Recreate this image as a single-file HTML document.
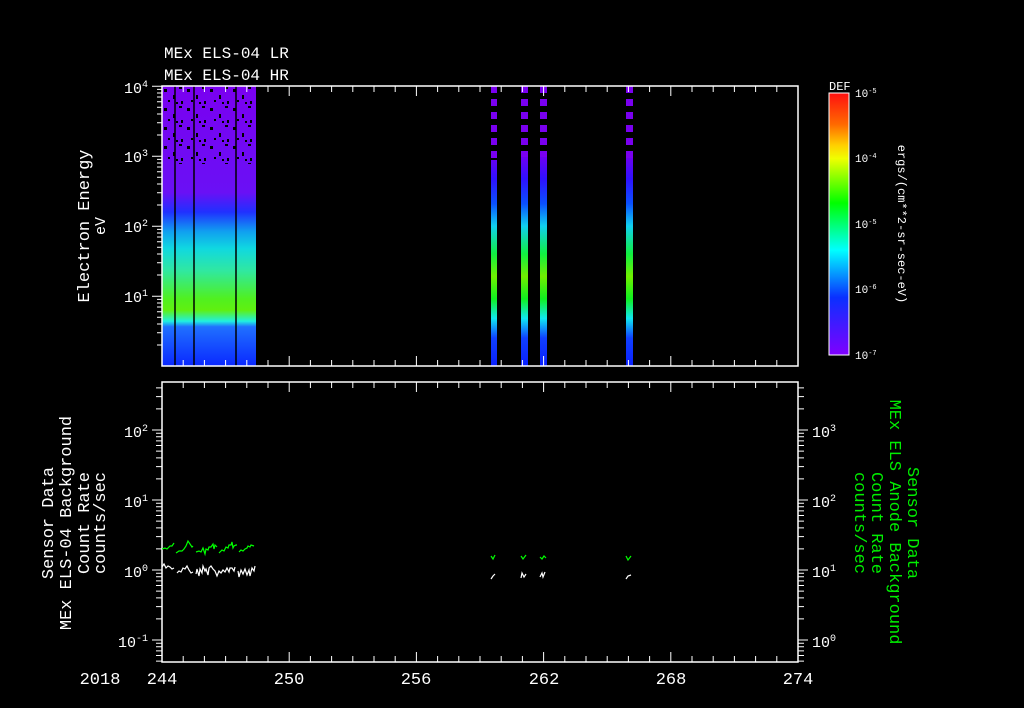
<!DOCTYPE html>
<html><head><meta charset="utf-8"><style>
html,body{margin:0;padding:0;background:#000;width:1024px;height:708px;overflow:hidden}
svg{display:block}
text{font-family:"Liberation Mono",monospace;fill:#fff}
</style></head><body>
<svg width="1024" height="708" viewBox="0 0 1024 708" xmlns="http://www.w3.org/2000/svg">
<defs>
<linearGradient id="cb" x1="0" y1="0" x2="0" y2="1">
<stop offset="0" stop-color="#ff1010"/><stop offset="0.12" stop-color="#ff6a00"/><stop offset="0.2" stop-color="#ffd000"/><stop offset="0.25" stop-color="#f0ff00"/><stop offset="0.42" stop-color="#00ff00"/><stop offset="0.6" stop-color="#00ffff"/><stop offset="0.78" stop-color="#0a30ff"/><stop offset="1" stop-color="#8000ff"/>
</linearGradient>
<linearGradient id="sp" x1="0" y1="86" x2="0" y2="366" gradientUnits="userSpaceOnUse">
<stop offset="0" stop-color="#7a00f0"/><stop offset="0.38" stop-color="#6a10f5"/><stop offset="0.45" stop-color="#2030ff"/><stop offset="0.52" stop-color="#10a0f0"/><stop offset="0.58" stop-color="#10d8e0"/><stop offset="0.66" stop-color="#30e8a0"/><stop offset="0.76" stop-color="#50f020"/><stop offset="0.8" stop-color="#60f010"/><stop offset="0.84" stop-color="#20f0e0"/><stop offset="0.86" stop-color="#2070ff"/><stop offset="1" stop-color="#0a28ff"/>
</linearGradient>
<linearGradient id="sk" x1="0" y1="86" x2="0" y2="366" gradientUnits="userSpaceOnUse">
<stop offset="0.25" stop-color="#7000f0"/><stop offset="0.33" stop-color="#3010ff"/><stop offset="0.42" stop-color="#0a50ff"/><stop offset="0.5" stop-color="#10d0f0"/><stop offset="0.6" stop-color="#10f040"/><stop offset="0.68" stop-color="#70f000"/><stop offset="0.76" stop-color="#10f020"/><stop offset="0.83" stop-color="#10e8f0"/><stop offset="0.9" stop-color="#1040ff"/><stop offset="1" stop-color="#0a20ff"/>
</linearGradient>
<pattern id="dots" x="162" y="86" width="23" height="19" patternUnits="userSpaceOnUse">
<rect x="2" y="3" width="3" height="3" fill="#000"/><rect x="11" y="9" width="2" height="4" fill="#000"/><rect x="17" y="1" width="3" height="2" fill="#000"/><rect x="6" y="14" width="2" height="2" fill="#000"/><rect x="19" y="15" width="2" height="3" fill="#000"/><rect x="14" y="16" width="2" height="2" fill="#000"/>
</pattern>
<pattern id="pd" x="0" y="86" width="8" height="13" patternUnits="userSpaceOnUse">
<rect x="0" y="0" width="8" height="7" fill="#7a00f0"/>
</pattern>
</defs>

<text x="164" y="58" font-size="16">MEx ELS-04 LR</text>
<text x="164" y="80" font-size="16">MEx ELS-04 HR</text>

<rect x="162" y="86" width="94" height="280" fill="url(#sp)"/>
<rect x="162" y="86" width="94" height="78" fill="url(#dots)"/>
<line x1="175" y1="86" x2="175" y2="366" stroke="#000" stroke-width="1.5"/>
<line x1="194" y1="86" x2="194" y2="366" stroke="#000" stroke-width="1.5"/>
<line x1="236" y1="86" x2="236" y2="366" stroke="#000" stroke-width="1.5"/>
<g>
<rect x="491" y="86" width="6" height="74" fill="url(#pd)"/><rect x="491" y="160" width="6" height="206" fill="url(#sk)"/>
<rect x="521" y="86" width="7" height="74" fill="url(#pd)"/><rect x="521" y="157" width="7" height="209" fill="url(#sk)"/>
<rect x="540" y="86" width="7" height="74" fill="url(#pd)"/><rect x="540" y="157" width="7" height="209" fill="url(#sk)"/>
<rect x="626" y="86" width="7" height="74" fill="url(#pd)"/><rect x="626" y="158" width="7" height="208" fill="url(#sk)"/>
</g>

<rect x="162" y="86" width="636" height="280" fill="none" stroke="#fff" stroke-width="1.5"/>
<rect x="162" y="382" width="636" height="280" fill="none" stroke="#fff" stroke-width="1.5"/>
<g id="ticks" stroke="#fff" stroke-width="1"></g>

<g font-size="15" text-anchor="end">
<text x="148" y="93">10<tspan font-size="10" dy="-6">4</tspan></text>
<text x="148" y="162">10<tspan font-size="10" dy="-6">3</tspan></text>
<text x="148" y="232">10<tspan font-size="10" dy="-6">2</tspan></text>
<text x="148" y="302">10<tspan font-size="10" dy="-6">1</tspan></text>
</g>
<text transform="translate(89,226) rotate(-90)" font-size="17" text-anchor="middle">Electron Energy</text>
<text transform="translate(105,226) rotate(-90)" font-size="15" text-anchor="middle">eV</text>

<text x="829" y="90" font-size="12">DEF</text>
<rect x="829" y="93" width="20" height="262" fill="url(#cb)" stroke="#fff" stroke-width="1"/>
<g font-size="11">
<text x="855" y="97">10<tspan font-size="7" dy="-4">-5</tspan></text>
<text x="855" y="162">10<tspan font-size="7" dy="-4">-4</tspan></text>
<text x="855" y="228">10<tspan font-size="7" dy="-4">-5</tspan></text>
<text x="855" y="293">10<tspan font-size="7" dy="-4">-6</tspan></text>
<text x="855" y="359">10<tspan font-size="7" dy="-4">-7</tspan></text>
</g>
<text transform="translate(898,224) rotate(90)" font-size="12" text-anchor="middle">ergs/(cm**2-sr-sec-eV)</text>

<g font-size="15" text-anchor="end">
<text x="148" y="437">10<tspan font-size="10" dy="-6">2</tspan></text>
<text x="148" y="507">10<tspan font-size="10" dy="-6">1</tspan></text>
<text x="148" y="577">10<tspan font-size="10" dy="-6">0</tspan></text>
<text x="148" y="647">10<tspan font-size="10" dy="-6">-1</tspan></text>
</g>
<g font-size="15">
<text x="812" y="437">10<tspan font-size="10" dy="-6">3</tspan></text>
<text x="812" y="507">10<tspan font-size="10" dy="-6">2</tspan></text>
<text x="812" y="577">10<tspan font-size="10" dy="-6">1</tspan></text>
<text x="812" y="647">10<tspan font-size="10" dy="-6">0</tspan></text>
</g>
<g font-size="17" text-anchor="middle">
<text transform="translate(53,523) rotate(-90)">Sensor Data</text>
<text transform="translate(71,523) rotate(-90)">MEx ELS-04 Background</text>
<text transform="translate(89,523) rotate(-90)">Count Rate</text>
<text transform="translate(105,523) rotate(-90)">counts/sec</text>
</g>
<g font-size="17" text-anchor="middle">
<text transform="translate(908,523) rotate(90)" style="fill:#00ee00">Sensor Data</text>
<text transform="translate(890,522) rotate(90)" style="fill:#00ee00">MEx ELS Anode Background</text>
<text transform="translate(872,523) rotate(90)" style="fill:#00ee00">Count Rate</text>
<text transform="translate(855,523) rotate(90)" style="fill:#00ee00">counts/sec</text>
</g>

<g fill="none" stroke="#00ff00" stroke-width="1.2">
<polyline points="162,549 165,548 167,549 170,546 172,546 174,543"/>
<polyline points="176,553 179,551 182,551 184,549 186,546 188,541 190,544 192,547 193,546"/>
<polyline points="196,552 199,551 201,552 203,548 205,554 206,549 208,550 209,547 211,547 213,544 214,549 215,545 217,547"/>
<polyline points="219,553 222,550 224,551 226,547 228,548 229,545 231,545 232,542 233,548 234,546 236,545 237,545"/>
<polyline points="239,552 241,550 243,551 245,549 247,548 248,546 250,547 251,545 254,546"/>
<polyline points="491,556 493,559 495,555"/>
<polyline points="521,556 523,559 526,555"/>
<polyline points="540,557 542,559 544,556 546,558"/>
<polyline points="626,556 628,560 631,556"/>
</g>
<g fill="none" stroke="#fff" stroke-width="1.2">
<polyline points="162,567 164,564 166,568 168,566 170,567 172,569 174,568"/>
<polyline points="177,573 179,571 181,572 183,568 185,569 187,566 189,570 191,573 193,572"/>
<polyline points="196,574 197,569 199,576 200,569 202,573 203,566 205,571 206,569 208,575 209,568 211,566 213,569 215,571 217,576 219,571 221,573 223,570 225,572 227,568 229,572 230,568 232,568 234,571 235,567"/>
<polyline points="238,571 239,577 241,570 243,574 245,569 247,575 249,570 250,576 252,568 254,571 255,566"/>
<polyline points="491,579 493,576 495,574"/>
<polyline points="521,578 522,573 524,577 526,574"/>
<polyline points="540,577 542,573 543,577 545,572"/>
<polyline points="626,579 628,576 631,575"/>
</g>

<g font-size="17" text-anchor="middle">
<text x="100" y="684">2018</text>
<text x="162" y="684">244</text>
<text x="289" y="684">250</text>
<text x="416" y="684">256</text>
<text x="544" y="684">262</text>
<text x="671" y="684">268</text>
<text x="798" y="684">274</text>
</g>
</svg>
<script>
(function(){
var g=document.getElementById('ticks'),d='';
function L(x1,y1,x2,y2){d+='M'+x1+' '+y1+'L'+x2+' '+y2;}
var lg=[0,0,0.301,0.477,0.602,0.699,0.778,0.845,0.903,0.954];
for(var i=0;i<=30;i++){var x=162+i*636/30;x=Math.round(x*10)/10;var len=(i%6==0)?10:6;
 L(x,86,x,86+len);L(x,366,x,366-len);L(x,382,x,382+len);L(x,662,x,662-len);}
var top=[366,296,226,156];
for(var j=0;j<top.length;j++){var b=top[j];for(var k=2;k<=9;k++){var y=b-69.8*lg[k];L(157,y,162,y);}L(152,b-69.8,162,b-69.8);}
var bs=[710,640,570,500,430];
for(var j=0;j<bs.length;j++){var b=bs[j];for(var k=1;k<=9;k++){var y=b-70*lg[k];if(y<382||y>662)continue;
 if(k==1){L(152,y,162,y);L(798,y,808,y);}else{L(156,y,162,y);L(798,y,804,y);}}}
var cb=[355,289.5,224,158.5];
for(var j=0;j<cb.length;j++){var b=cb[j];for(var k=2;k<=9;k++){var y=b-65.5*lg[k];L(844,y,849,y);}L(842,b-65.5,849,b-65.5);}
var p=document.createElementNS('http://www.w3.org/2000/svg','path');p.setAttribute('d',d);g.appendChild(p);
})();
</script>
</body></html>
